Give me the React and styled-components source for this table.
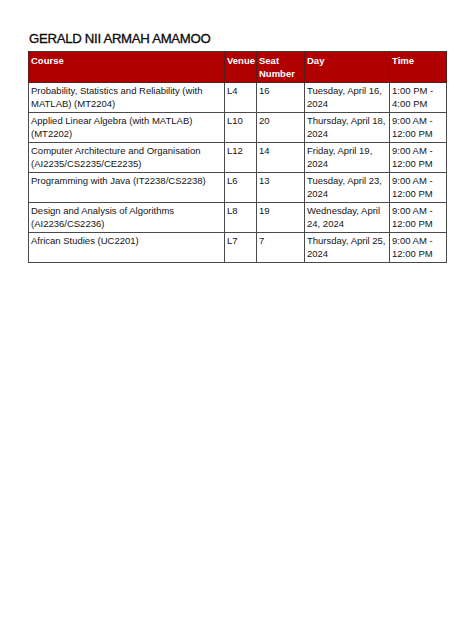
import React from "react";
import styled, { createGlobalStyle } from "styled-components";

const Global = createGlobalStyle`
  html, body { margin: 0; padding: 0; background: #ffffff; }
  body { font-family: "Liberation Sans", Arial, sans-serif; }
`;

const Page = styled.div`
  width: 474px;
  height: 632px;
  box-sizing: border-box;
  padding: 31px 28px 0 28px;
  background: #fff;
`;

const Title = styled.h1`
  margin: 0 0 5px 1px;
  font-size: 13.2px;
  line-height: 15px;
  font-weight: normal;
  letter-spacing: -0.3px;
  color: #0a0a0a;
  -webkit-text-stroke: 0.3px #0a0a0a;
`;

const Table = styled.table`
  width: 418px;
  border-collapse: collapse;
  table-layout: fixed;
  font-size: 9.5px;
  line-height: 13px;
  color: #141414;
  border: 1px solid #3a3a3a;
`;

const HeadCell = styled.th`
  background: #b10000;
  color: #fff;
  font-weight: bold;
  text-align: left;
  vertical-align: top;
  padding: 2px 2px 2px 2px;
  height: 26px;
  border: 1px solid #5a1a1a;
  border-top-color: #3a3a3a;
`;

const Cell = styled.td`
  vertical-align: top;
  padding: 1px 2px 2px 2px;
  height: 26px;
  border: 1px solid #4a4a4a;
  overflow: hidden;
`;

const cols = [196, 32, 48, 85, 57];

const rows = [
  ["Probability, Statistics and Reliability (with MATLAB) (MT2204)", "L4", "16", "Tuesday, April 16, 2024", "1:00 PM - 4:00 PM"],
  ["Applied Linear Algebra (with MATLAB) (MT2202)", "L10", "20", "Thursday, April 18, 2024", "9:00 AM - 12:00 PM"],
  ["Computer Architecture and Organisation (AI2235/CS2235/CE2235)", "L12", "14", "Friday, April 19, 2024", "9:00 AM - 12:00 PM"],
  ["Programming with Java (IT2238/CS2238)", "L6", "13", "Tuesday, April 23, 2024", "9:00 AM - 12:00 PM"],
  ["Design and Analysis of Algorithms (AI2236/CS2236)", "L8", "19", "Wednesday, April 24, 2024", "9:00 AM - 12:00 PM"],
  ["African Studies (UC2201)", "L7", "7", "Thursday, April 25, 2024", "9:00 AM - 12:00 PM"],
];

export default function App() {
  return (
    <>
      <Global />
      <Page>
        <Title>GERALD NII ARMAH AMAMOO</Title>
        <Table>
          <colgroup>
            {cols.map((w, i) => (
              <col key={i} style={{ width: w }} />
            ))}
          </colgroup>
          <thead>
            <tr>
              <HeadCell>Course</HeadCell>
              <HeadCell>Venue</HeadCell>
              <HeadCell>Seat Number</HeadCell>
              <HeadCell>Day</HeadCell>
              <HeadCell>Time</HeadCell>
            </tr>
          </thead>
          <tbody>
            {rows.map((r, i) => (
              <tr key={i}>
                {r.map((c, j) => (
                  <Cell key={j}>{c}</Cell>
                ))}
              </tr>
            ))}
          </tbody>
        </Table>
      </Page>
    </>
  );
}
